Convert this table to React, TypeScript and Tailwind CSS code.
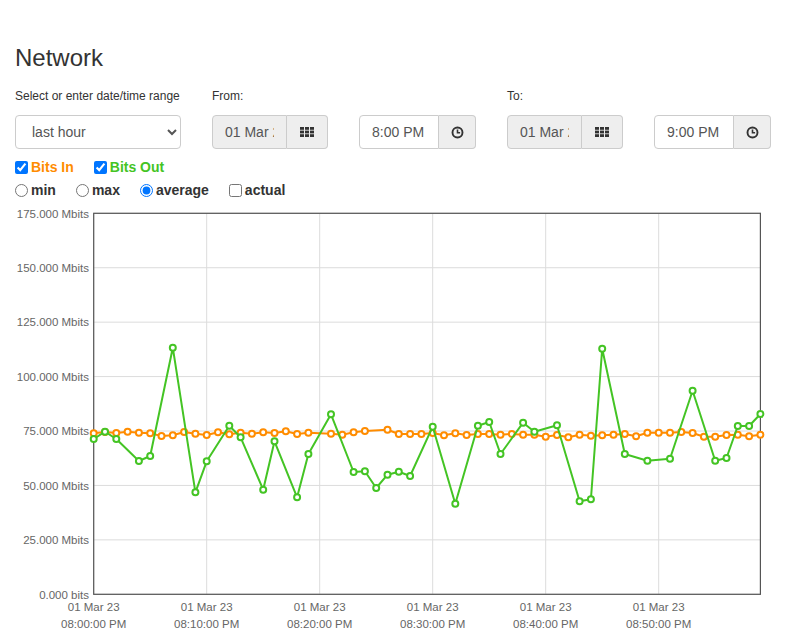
import React from "react";

const GREEN = "#44c424";
const ORANGE = "#ff8c00";

const orange: [number, number][] = [
  [0, 433.3], [1, 432], [2, 433], [3, 431.7], [4, 432.7], [5, 433.3], [6, 436], [7, 435.3], [8, 432], [9, 433.7],
  [10, 435], [11, 432.3], [12, 434.3], [13, 432.7], [14, 433.7], [15, 432.3], [16, 433], [17, 431.3], [18, 434], [19, 432.7],
  [21, 433.7], [22, 434.7], [23, 432.3], [24, 431], [26, 429.7], [27, 434], [28, 434], [29, 434], [30, 433],
  [31, 435.3], [32, 433.3], [33, 435], [34, 434], [35, 434], [36, 434.7], [37, 434], [38, 434.7], [39, 434.7], [40, 436.7],
  [41, 435], [42, 437.3], [43, 434.7], [44, 435.7], [45, 435.3], [46, 434.7], [47, 434], [48, 436.3], [49, 432.7], [50, 432.7],
  [51, 432.7], [52, 432], [53, 433], [54, 436.7], [55, 436.7], [56, 435], [57, 434.7], [58, 436.3], [59, 434.7],
];

const green: [number, number][] = [
  [0, 439], [1, 431.7], [2, 439], [4, 461], [5, 456], [7, 347.7], [9, 492.3], [10, 461.3], [12, 425.7], [13, 437.3],
  [15, 489.7], [16, 441.3], [18, 497.3], [19, 454], [21, 414.3], [23, 472], [24, 471.3], [25, 488], [26, 474.7], [27, 471.7],
  [28, 476], [30, 426.7], [32, 503.7], [34, 425.7], [35, 422], [36, 454], [38, 422.7], [39, 431.7], [41, 425.3], [43, 501.3],
  [44, 499.3], [45, 348.7], [47, 454], [49, 460.7], [51, 458.7], [53, 390.7], [55, 460.7], [56, 458], [57, 426], [58, 426], [59, 414],
];

const LEFT = 93.7;
const RIGHT = 760.4;
const TOP = 213.3;
const BOTTOM = 594.3;
const xOf = (m: number) => LEFT + m * 11.3;

function Series({ data, color }: { data: [number, number][]; color: string }) {
  const d = data.map(([m, y], i) => `${i === 0 ? "M" : "L"}${xOf(m).toFixed(1)},${y}`).join(" ");
  return (
    <g>
      <path d={d} fill="none" stroke={color} strokeWidth={2} strokeLinejoin="round" />
      {data.map(([m, y]) => (
        <circle key={m} cx={xOf(m)} cy={y} r={3} fill="#fff" stroke={color} strokeWidth={2} />
      ))}
    </g>
  );
}

function Chart() {
  const yTicks = ["175.000 Mbits", "150.000 Mbits", "125.000 Mbits", "100.000 Mbits", "75.000 Mbits", "50.000 Mbits", "25.000 Mbits", "0.000 bits"];
  const xTicks = ["08:00:00 PM", "08:10:00 PM", "08:20:00 PM", "08:30:00 PM", "08:40:00 PM", "08:50:00 PM"];
  const step = (BOTTOM - TOP) / 7;
  return (
    <svg width={772} height={429} viewBox="15 205 772 429" className="block" style={{ fontFamily: '"Liberation Sans", Arial, sans-serif' }}>
      {yTicks.map((_, i) => (
        <line key={"h" + i} x1={LEFT} x2={RIGHT} y1={TOP + i * step} y2={TOP + i * step} stroke="#dcdcdc" strokeWidth={1} />
      ))}
      {xTicks.map((_, i) => (
        <line key={"v" + i} x1={LEFT + i * 113} x2={LEFT + i * 113} y1={TOP} y2={BOTTOM} stroke="#dcdcdc" strokeWidth={1} />
      ))}
      <rect x={LEFT} y={TOP} width={RIGHT - LEFT} height={BOTTOM - TOP} fill="none" stroke="#555" strokeWidth={1.2} />
      {yTicks.map((t, i) => (
        <text key={t} x={89} y={TOP + i * step + 4.2} textAnchor="end" fontSize={11.5} fill="#666">
          {t}
        </text>
      ))}
      {xTicks.map((t, i) => (
        <text key={t} x={LEFT + i * 113} textAnchor="middle" fontSize={11.5} fill="#666">
          <tspan x={LEFT + i * 113} y={611}>01 Mar 23</tspan>
          <tspan x={LEFT + i * 113} y={628}>{t}</tspan>
        </text>
      ))}
      <Series data={orange} color={ORANGE} />
      <Series data={green} color={GREEN} />
    </svg>
  );
}

function GridIcon() {
  const cells = [];
  for (let r = 0; r < 3; r++)
    for (let c = 0; c < 3; c++) cells.push(<rect key={`${r}${c}`} x={c * 5} y={r * 3.6} width={4} height={2.8} fill="#333" />);
  return (
    <svg width={14} height={10} viewBox="0 0 14 10">
      {cells}
    </svg>
  );
}

function ClockIcon() {
  return (
    <svg width={13} height={13} viewBox="-6.5 -6.5 13 13">
      <circle cx={0} cy={0} r={5} fill="none" stroke="#333" strokeWidth={1.9} />
      <path d="M0,-3 L0,0.3 L2.6,0.3" fill="none" stroke="#333" strokeWidth={1.6} />
    </svg>
  );
}

function DateGroup() {
  return (
    <div className="flex h-[34px] w-[116px]">
      <input
        readOnly
        value="01 Mar 23"
        className="w-[75px] min-w-0 rounded-l-[4px] border border-[#ccc] bg-[#eee] px-[12px] text-[14px] text-[#555] outline-none"
      />
      <div className="flex w-[41px] items-center justify-center rounded-r-[4px] border border-l-0 border-[#ccc] bg-[#eee]">
        <GridIcon />
      </div>
    </div>
  );
}

function TimeGroup({ value }: { value: string }) {
  return (
    <div className="flex h-[34px] w-[117px]">
      <input
        readOnly
        value={value}
        className="w-[80px] min-w-0 rounded-l-[4px] border border-[#ccc] bg-white px-[12px] text-[14px] text-[#555] outline-none"
      />
      <div className="flex w-[37px] items-center justify-center rounded-r-[4px] border border-l-0 border-[#ccc] bg-[#eee]">
        <ClockIcon />
      </div>
    </div>
  );
}

export default function App() {
  return (
    <div className="min-h-[634px] bg-white pl-[15px] pt-[44px] text-[#333]" style={{ fontFamily: '"Liberation Sans", Arial, sans-serif' }}>
      <h1 className="text-[24px] leading-[28px] font-normal">Network</h1>
      <div className="mt-[17px] flex">
        <div className="w-[166px]">
          <div className="text-[12px] leading-[14px]">Select or enter date/time range</div>
          <select
            defaultValue="last hour"
            className="mt-[12px] h-[34px] w-[166px] rounded-[4px] border border-[#ccc] bg-white px-[12px] text-[14px] text-[#555]"
          >
            <option>last hour</option>
            <option>last day</option>
            <option>last week</option>
          </select>
        </div>
        <div className="ml-[31px] w-[264px]">
          <div className="text-[12px] leading-[14px]">From:</div>
          <div className="mt-[12px] flex gap-[31px]">
            <DateGroup />
            <TimeGroup value="8:00 PM" />
          </div>
        </div>
        <div className="ml-[31px] w-[264px]">
          <div className="text-[12px] leading-[14px]">To:</div>
          <div className="mt-[12px] flex gap-[31px]">
            <DateGroup />
            <TimeGroup value="9:00 PM" />
          </div>
        </div>
      </div>
      <div className="mt-[8px] flex h-[20px] items-center text-[14px] font-bold">
        <label className="mr-[20px] flex items-center gap-[3px]">
          <input type="checkbox" defaultChecked className="m-0 h-[13px] w-[13px]" />
          <span style={{ color: ORANGE }}>Bits In</span>
        </label>
        <label className="flex items-center gap-[3px]">
          <input type="checkbox" defaultChecked className="m-0 h-[13px] w-[13px]" />
          <span style={{ color: GREEN }}>Bits Out</span>
        </label>
      </div>
      <div className="mt-[3px] flex h-[20px] items-center text-[14px] font-bold">
        <label className="mr-[20px] flex items-center gap-[3px]">
          <input type="radio" name="agg" className="m-0 h-[13px] w-[13px]" />
          <span>min</span>
        </label>
        <label className="mr-[20px] flex items-center gap-[3px]">
          <input type="radio" name="agg" className="m-0 h-[13px] w-[13px]" />
          <span>max</span>
        </label>
        <label className="mr-[20px] flex items-center gap-[3px]">
          <input type="radio" name="agg" defaultChecked className="m-0 h-[13px] w-[13px]" />
          <span>average</span>
        </label>
        <label className="flex items-center gap-[3px]">
          <input type="checkbox" className="m-0 h-[13px] w-[13px]" />
          <span>actual</span>
        </label>
      </div>
      <div className="mt-[5px]">
        <Chart />
      </div>
    </div>
  );
}
